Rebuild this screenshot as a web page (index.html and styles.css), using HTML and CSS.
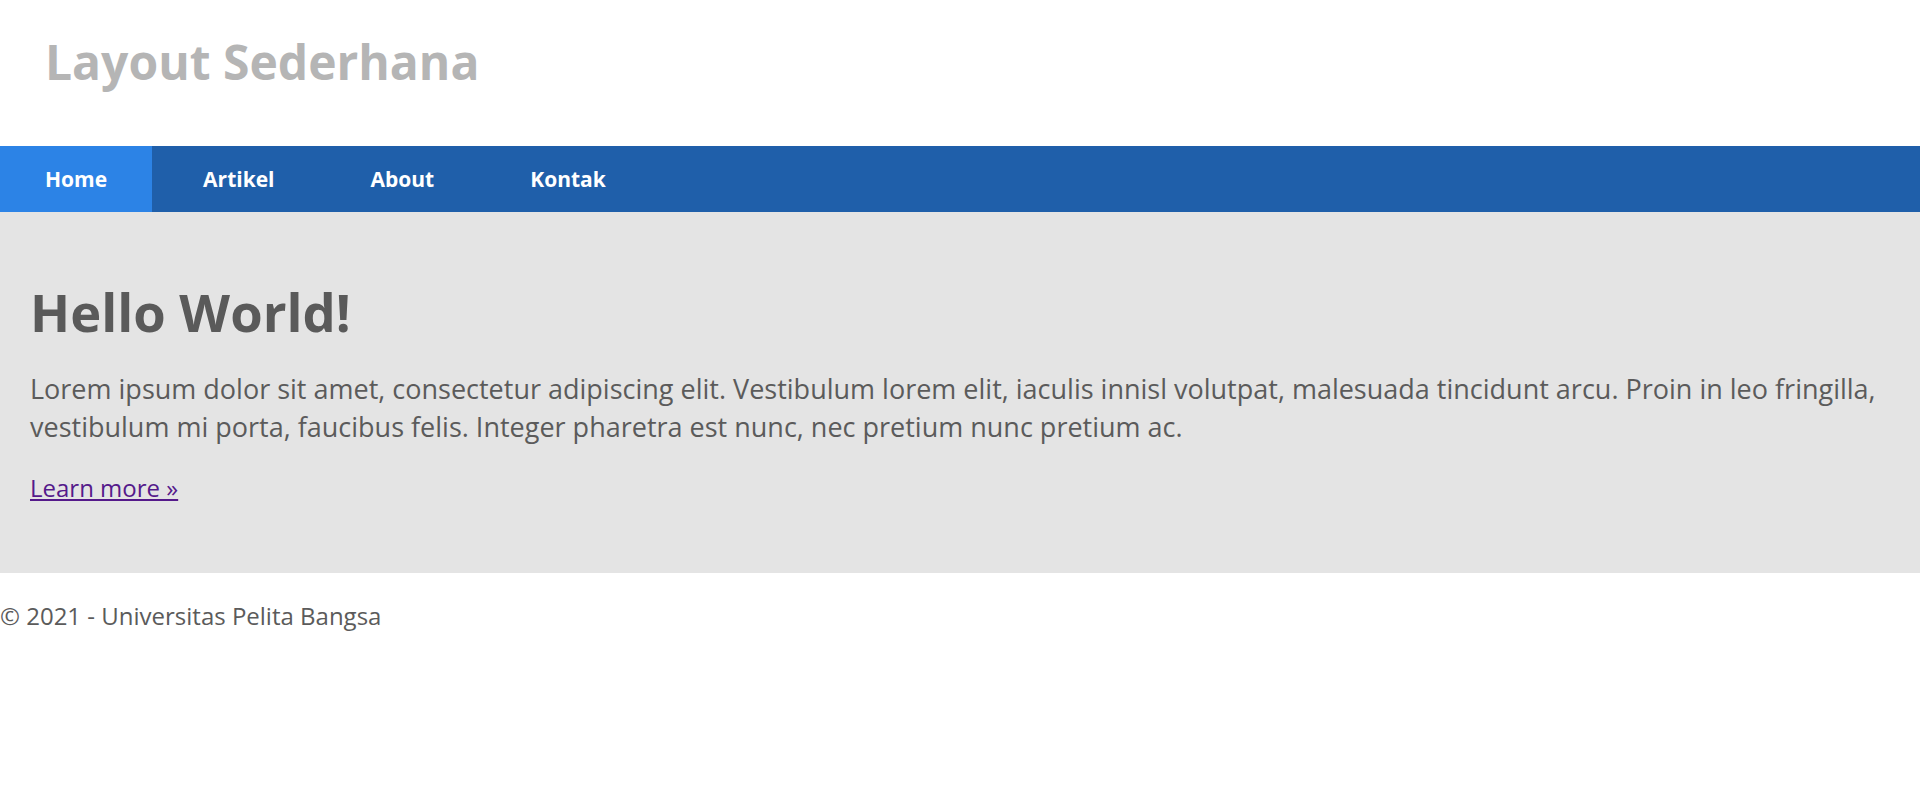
FILE: index.html
```html
<!DOCTYPE html>
<html lang="id">
<head>
<meta charset="utf-8">
<title>Layout Sederhana</title>
<link rel="stylesheet" href="styles.css">
</head>
<body>
<header class="site-header">
  <h1 class="site-title">Layout Sederhana</h1>
</header>
<nav class="main-nav">
  <a class="nav-link active" href="#">Home</a>
  <a class="nav-link" href="#">Artikel</a>
  <a class="nav-link" href="#">About</a>
  <a class="nav-link" href="#">Kontak</a>
</nav>
<section class="hero">
  <h1 class="hero-title">Hello World!</h1>
  <p class="hero-text">Lorem ipsum dolor sit amet, consectetur adipiscing elit. Vestibulum lorem elit, iaculis innisl volutpat, malesuada tincidunt arcu. Proin in leo fringilla, vestibulum mi porta, faucibus felis. Integer pharetra est nunc, nec pretium nunc pretium ac.</p>
  <p class="hero-more"><a class="hero-link" href="#">Learn more &raquo;</a></p>
</section>
<footer class="site-footer">
  <p class="footer-text">&copy; 2021 - Universitas Pelita Bangsa</p>
</footer>
</body>
</html>
```

FILE: styles.css
```css
* {
  box-sizing: border-box;
}

html, body {
  margin: 0;
  padding: 0;
}

body {
  font-family: "Open Sans", "Noto Sans", sans-serif;
  color: #5b5b5b;
  background: #ffffff;
  font-size: 24px;
  line-height: 1.6;
}

.site-header {
  height: 146px;
  padding: 29px 0 0 45px;
}

.site-title {
  margin: 0;
  font-size: 48px;
  font-weight: 700;
  line-height: normal;
  color: #b5b5b5;
}

.main-nav {
  display: flex;
  gap: 6px;
  height: 66px;
  background: #1f5faa;
}

.nav-link {
  display: block;
  padding: 0 45px;
  font-size: 21px;
  font-weight: 700;
  line-height: 66px;
  color: #ffffff;
  text-decoration: none;
}

.nav-link.active {
  background: #2c83e6;
}

.hero {
  background: #e4e4e4;
  padding: 64px 30px 68px;
  height: 361px;
}

.hero-title {
  margin: 0 0 22px;
  font-size: 52.5px;
  font-weight: 700;
  line-height: 72px;
  color: #5a5a5a;
}

.hero-text {
  margin: 0 0 22px;
  font-size: 27px;
  line-height: 38.4px;
}

.hero-more {
  margin: 0;
}

.hero-link {
  color: #551a8b;
  text-decoration: underline;
}

.site-footer {
  padding: 24px 0;
}

.footer-text {
  margin: 0;
}
```
